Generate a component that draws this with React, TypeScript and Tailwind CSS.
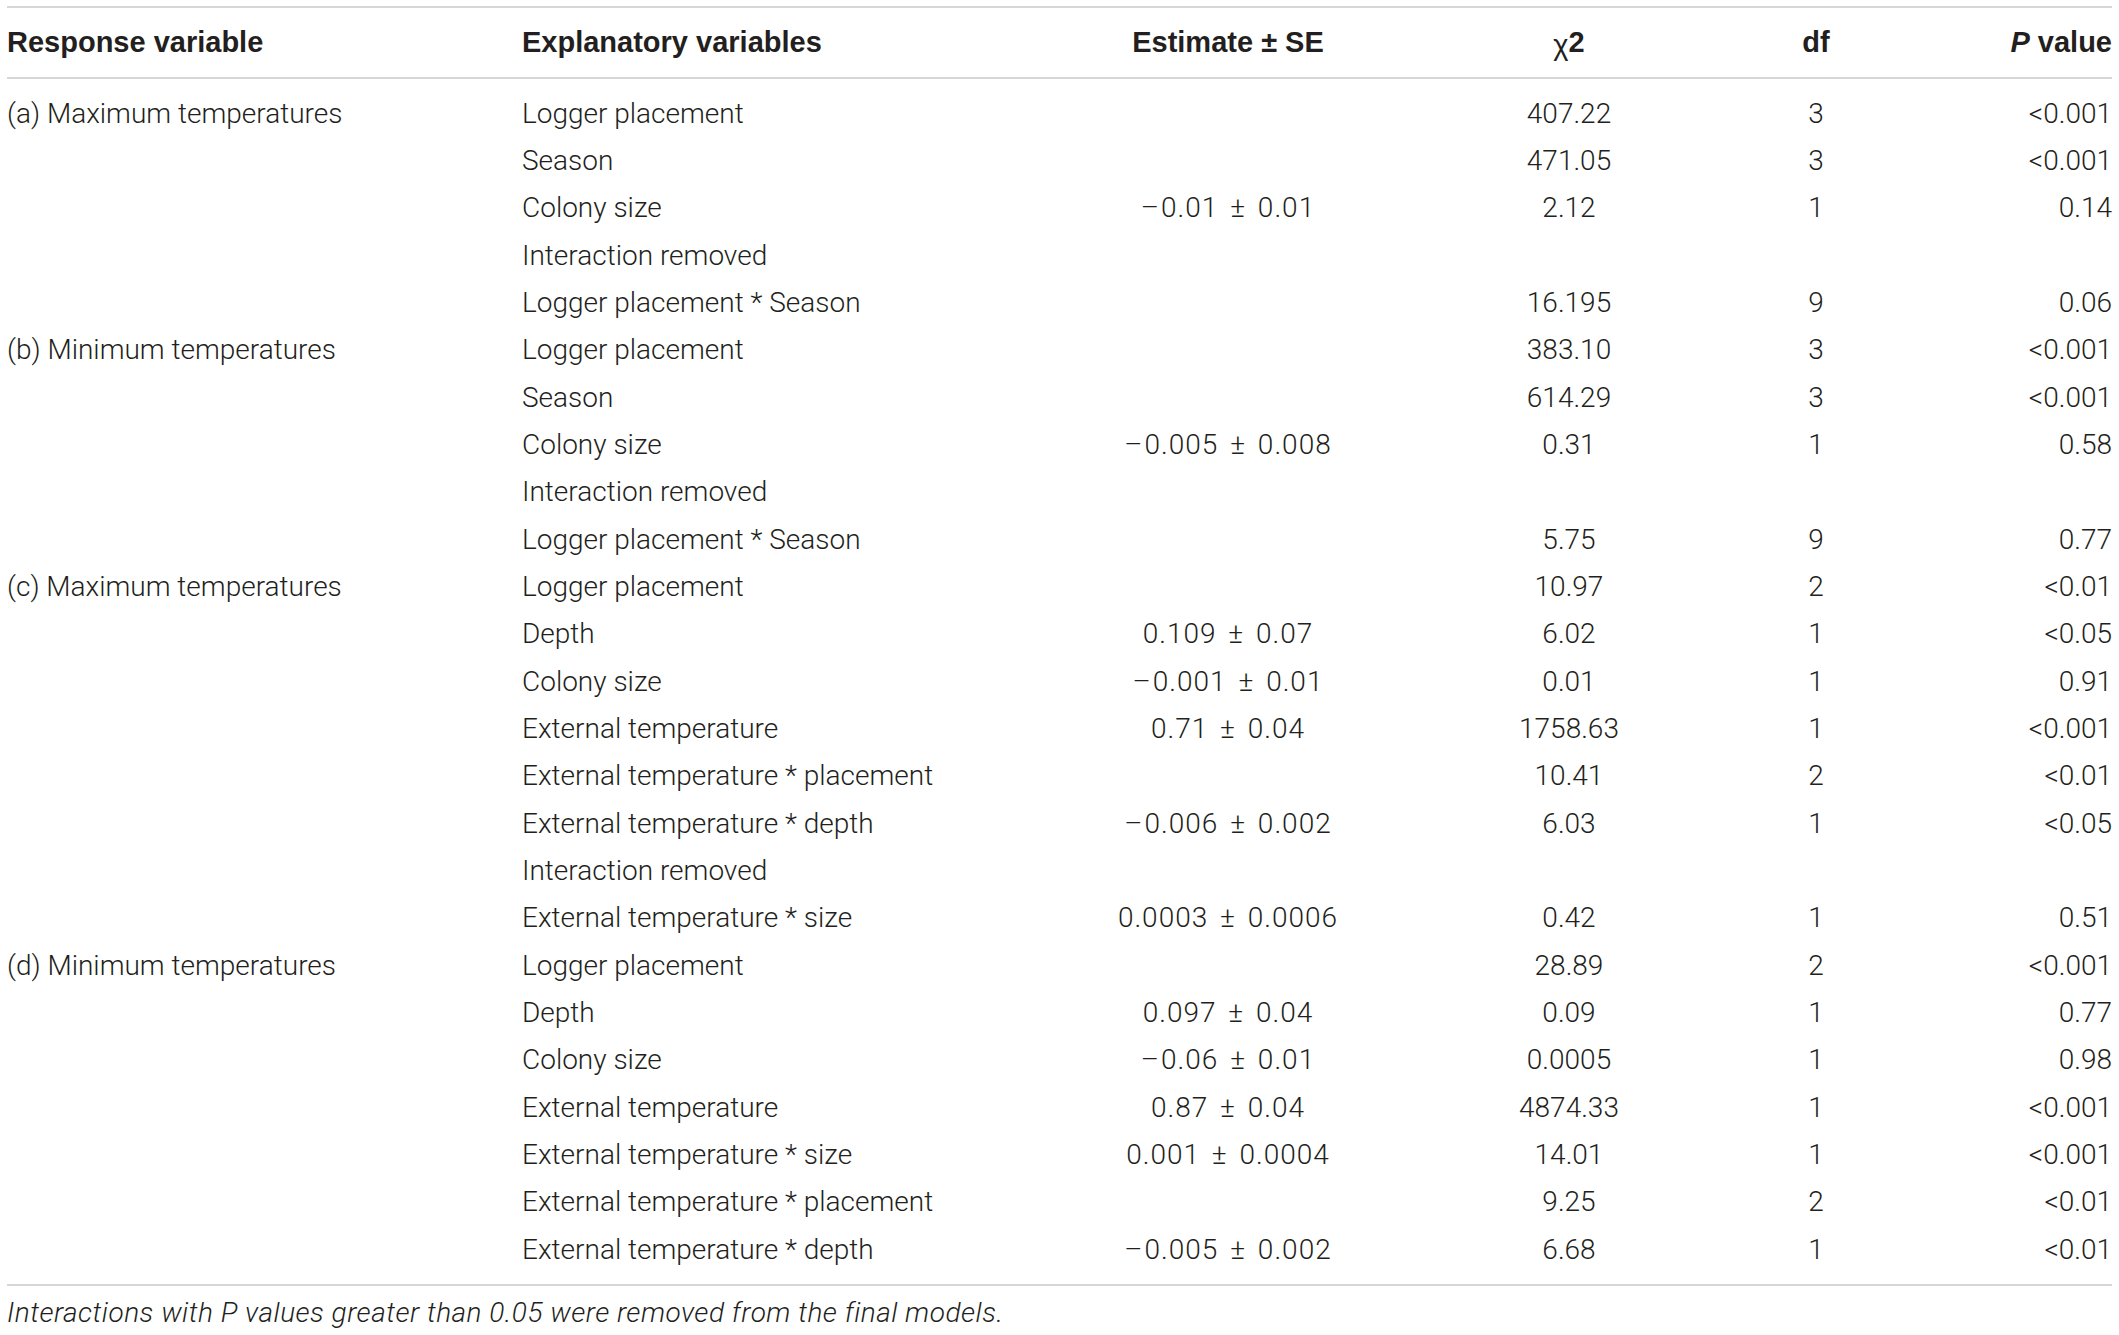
type Row = [string, string, string, string, string, string];

const rows: Row[] = [
  ["(a) Maximum temperatures", "Logger placement", "", "407.22", "3", "<0.001"],
  ["", "Season", "", "471.05", "3", "<0.001"],
  ["", "Colony size", "\u22120.01 \u00b1 0.01", "2.12", "1", "0.14"],
  ["", "Interaction removed", "", "", "", ""],
  ["", "Logger placement * Season", "", "16.195", "9", "0.06"],
  ["(b) Minimum temperatures", "Logger placement", "", "383.10", "3", "<0.001"],
  ["", "Season", "", "614.29", "3", "<0.001"],
  ["", "Colony size", "\u22120.005 \u00b1 0.008", "0.31", "1", "0.58"],
  ["", "Interaction removed", "", "", "", ""],
  ["", "Logger placement * Season", "", "5.75", "9", "0.77"],
  ["(c) Maximum temperatures", "Logger placement", "", "10.97", "2", "<0.01"],
  ["", "Depth", "0.109 \u00b1 0.07", "6.02", "1", "<0.05"],
  ["", "Colony size", "\u22120.001 \u00b1 0.01", "0.01", "1", "0.91"],
  ["", "External temperature", "0.71 \u00b1 0.04", "1758.63", "1", "<0.001"],
  ["", "External temperature * placement", "", "10.41", "2", "<0.01"],
  ["", "External temperature * depth", "\u22120.006 \u00b1 0.002", "6.03", "1", "<0.05"],
  ["", "Interaction removed", "", "", "", ""],
  ["", "External temperature * size", "0.0003 \u00b1 0.0006", "0.42", "1", "0.51"],
  ["(d) Minimum temperatures", "Logger placement", "", "28.89", "2", "<0.001"],
  ["", "Depth", "0.097 \u00b1 0.04", "0.09", "1", "0.77"],
  ["", "Colony size", "\u22120.06 \u00b1 0.01", "0.0005", "1", "0.98"],
  ["", "External temperature", "0.87 \u00b1 0.04", "4874.33", "1", "<0.001"],
  ["", "External temperature * size", "0.001 \u00b1 0.0004", "14.01", "1", "<0.001"],
  ["", "External temperature * placement", "", "9.25", "2", "<0.01"],
  ["", "External temperature * depth", "\u22120.005 \u00b1 0.002", "6.68", "1", "<0.01"],
];

const cols = "grid grid-cols-[515px_506px_400px_282px_212px_190px]";

// the minus sign in the source is a long dash, wider than Roboto's
function Estimate({ value }: { value: string }) {
  if (!value) return null;
  const neg = value.startsWith("\u2212");
  return (
    <span className="tracking-[1px] [word-spacing:4px]">
      {neg && <span className="mr-[1px]">&ndash;</span>}
      {neg ? value.slice(1) : value}
    </span>
  );
}

export default function App() {
  return (
    <div className="min-h-screen bg-white text-[#231f20] font-['Roboto','Liberation_Sans',sans-serif]">
      <div className="ml-[7px] w-[2105px] pt-[6px]">
        {/* Header */}
        <div className={`${cols} h-[73px] items-center border-y-2 border-[#d6d6d6] font-['Liberation_Sans',Arial,sans-serif] font-bold text-[29px] leading-none`}>
          <div>Response variable</div>
          <div>Explanatory variables</div>
          <div className="text-center">Estimate &plusmn; SE</div>
          <div className="text-center">
            <span className="relative top-[3px] font-normal">&chi;</span>2
          </div>
          <div className="text-center">df</div>
          <div className="text-right">
            <span className="italic">P</span> value
          </div>
        </div>

        {/* Body */}
        <div className="py-[11px] font-light text-[28px] leading-none">
          {rows.map((r, i) => (
            <div key={i} className={`${cols} h-[47.33px] items-center`}>
              <div>{r[0]}</div>
              <div>{r[1]}</div>
              <div className="text-center">
                <Estimate value={r[2]} />
              </div>
              <div className="text-center">{r[3]}</div>
              <div className="text-center">{r[4]}</div>
              <div className="text-right">{r[5]}</div>
            </div>
          ))}
        </div>

        {/* Footnote */}
        <div className="border-t-2 border-[#d6d6d6] pt-[11px] font-light italic text-[28px] leading-[32px] tracking-[0.5px]">
          Interactions with P values greater than 0.05 were removed from the final models.
        </div>
      </div>
    </div>
  );
}
